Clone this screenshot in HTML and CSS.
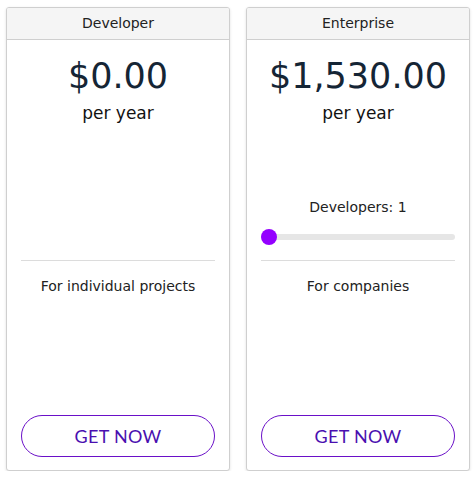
FILE: index.html
```html
<!DOCTYPE html>
<html>
<head>
<meta charset="utf-8">
<link rel="stylesheet" href="styles.css">
</head>
<body>
<div class="plans">
  <div class="card">
    <div class="card-head">Developer</div>
    <div class="card-body">
      <div class="price">$0.00</div>
      <div class="period">per year</div>
      <div class="extras"></div>
      <hr class="divider">
      <div class="desc">For individual projects</div>
      <div class="spacer"></div>
      <button class="cta">GET NOW</button>
    </div>
  </div>
  <div class="card">
    <div class="card-head">Enterprise</div>
    <div class="card-body">
      <div class="price">$1,530.00</div>
      <div class="period">per year</div>
      <div class="extras">
        <div class="dev-label">Developers: 1</div>
        <input class="slider" type="range" min="1" max="50" value="1">
      </div>
      <hr class="divider">
      <div class="desc">For companies</div>
      <div class="spacer"></div>
      <button class="cta">GET NOW</button>
    </div>
  </div>
</div>
</body>
</html>
```
FILE: styles.css
```css
html, body {
  margin: 0;
  padding: 0;
  background: #ffffff;
}
body {
  font-family: "DejaVu Sans", Verdana, sans-serif;
  color: #222;
}
.plans {
  display: grid;
  grid-template-columns: 224px 224px;
  gap: 16px;
  padding: 7px 0 0 6px;
}
.card {
  height: 464px;
  box-sizing: border-box;
  border: 1px solid #cfcfcf;
  border-radius: 3px;
  box-shadow: 0 1px 3px rgba(0,0,0,0.12);
  display: flex;
  flex-direction: column;
  overflow: hidden;
  background: #fff;
}
.card-head {
  height: 31px;
  line-height: 31px;
  background: #f5f5f5;
  border-bottom: 1px solid #cfcfcf;
  text-align: center;
  font-size: 14px;
  color: #222;
}
.card-body {
  flex: 1;
  display: flex;
  flex-direction: column;
  padding: 14px 14px 13px;
  text-align: center;
}
.price {
  font-size: 35px;
  line-height: 44px;
  color: #152535;
}
.period {
  font-size: 17px;
  line-height: 22px;
  margin-top: 4px;
  color: #111;
}
.extras {
  height: 136px;
  display: flex;
  flex-direction: column;
  justify-content: flex-end;
  padding-bottom: 15px;
  box-sizing: border-box;
}
.dev-label {
  font-size: 14px;
  line-height: 18px;
  color: #222;
  margin-bottom: 13px;
}
.slider {
  -webkit-appearance: none;
  appearance: none;
  width: 100%;
  height: 16px;
  margin: 0;
  padding: 0;
  background: transparent;
  display: block;
}
.slider::-webkit-slider-runnable-track {
  height: 6px;
  background: #e6e6e6;
  border-radius: 3px;
}
.slider::-webkit-slider-thumb {
  -webkit-appearance: none;
  width: 16px;
  height: 16px;
  border-radius: 50%;
  background: #9400ff;
  border: none;
  margin-top: -5px;
}
.divider {
  border: none;
  border-top: 1px solid #dcdcdc;
  margin: 0;
  height: 0;
}
.desc {
  font-size: 14px;
  line-height: 18px;
  margin-top: 16px;
  color: #222;
}
.spacer {
  flex: 1;
}
.cta {
  height: 42px;
  width: 100%;
  border: 1px solid #6a10c8;
  border-radius: 21px;
  background: #fff;
  color: #4a0fb0;
  font-family: Lato, "Open Sans", sans-serif;
  font-size: 18px;
  letter-spacing: 0.3px;
  padding: 0;
}
```
